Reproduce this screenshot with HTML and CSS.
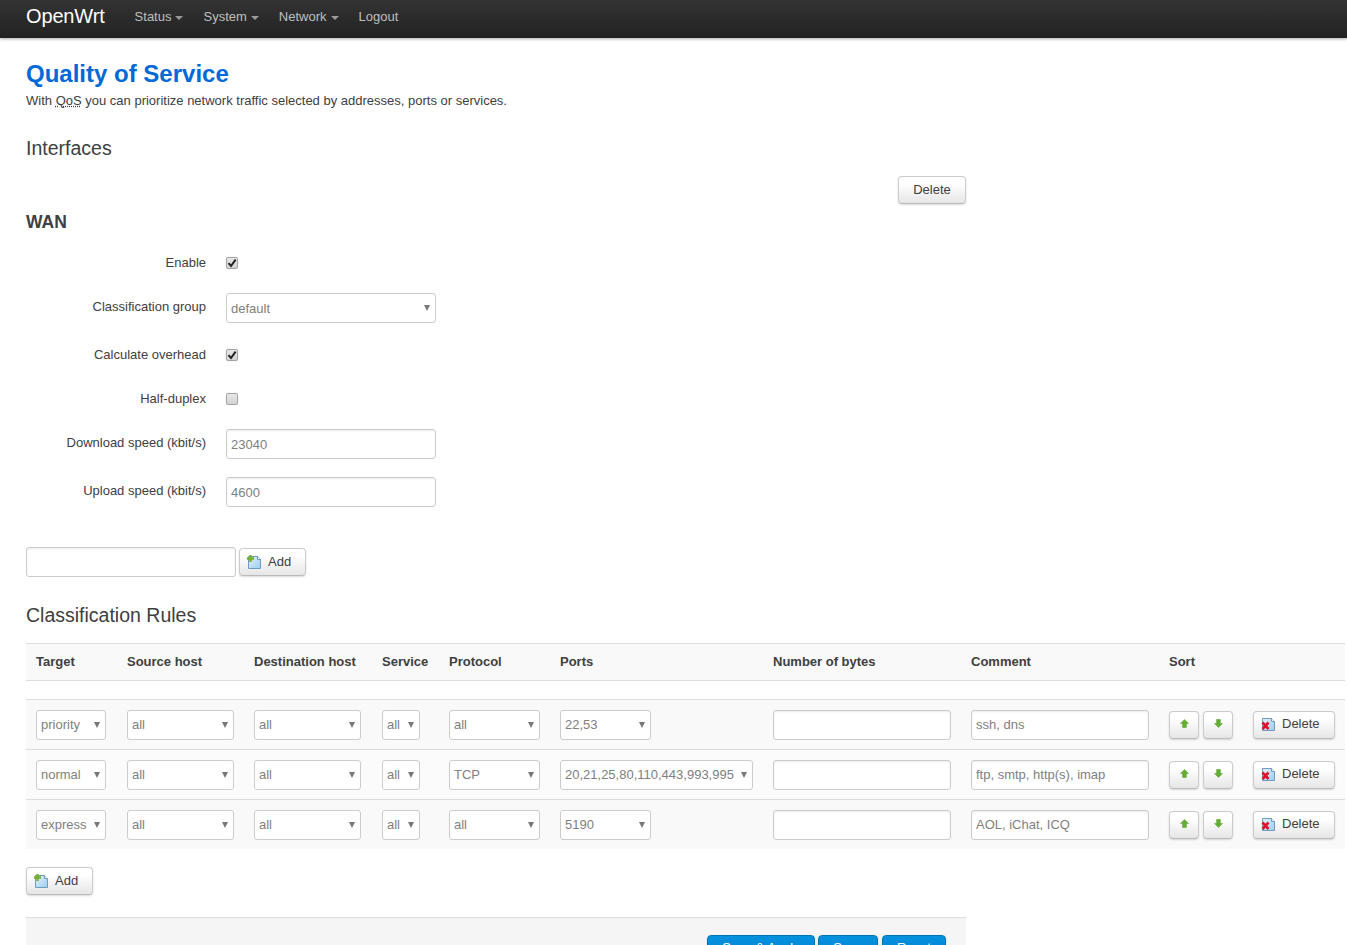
FILE: index.html
```html
<!DOCTYPE html>
<html lang="en">
<head>
<meta charset="utf-8">
<title>Quality of Service - OpenWrt</title>
<link rel="stylesheet" href="styles.css">
</head>
<body>
<svg class="defs" width="0" height="0" aria-hidden="true">
  <defs>
    <linearGradient id="docfill" x1="0" y1="0" x2="1" y2="1">
      <stop offset="0" stop-color="#e4f2fc"/>
      <stop offset="1" stop-color="#9ccdf0"/>
    </linearGradient>
    <symbol id="i-add" viewBox="0 0 15 15">
      <path d="M1.5 1.5h9l3 3v9h-12z" fill="url(#docfill)" stroke="#6f9cbd"/>
      <path d="M10.5 1.5v3h3" fill="#fff" stroke="#6f9cbd"/>
      <path d="M3.5 0v7M0 3.5h7" stroke="#74b02c" stroke-width="2.4"/>
    </symbol>
    <symbol id="i-del" viewBox="0 0 15 15">
      <path d="M1.5 1.5h9l3 3v9h-12z" fill="url(#docfill)" stroke="#6f9cbd"/>
      <path d="M10.5 1.5v3h3" fill="#fff" stroke="#6f9cbd"/>
      <path d="M1.5 5.5l6 6.5M7.5 5.5l-6 6.5" stroke="#e0122a" stroke-width="2.6"/>
    </symbol>
    <symbol id="i-up" viewBox="0 0 9 9">
      <path d="M4.5.5L8.5 4.5H6.4V8.5H2.6V4.5H.5z" fill="#66ad35" stroke="#559a28" stroke-width=".5"/>
    </symbol>
    <symbol id="i-down" viewBox="0 0 9 9">
      <path d="M4.5 8.5L8.5 4.5H6.4V.5H2.6V4.5H.5z" fill="#66ad35" stroke="#559a28" stroke-width=".5"/>
    </symbol>
    <symbol id="i-check" viewBox="0 0 10 10">
      <path d="M1.5 5.2L4 8 8.6 1.6" fill="none" stroke="#222" stroke-width="2"/>
    </symbol>
  </defs>
</svg>

<header class="navbar">
  <a class="brand" href="#">OpenWrt</a>
  <nav class="menu">
    <a class="menu-item" href="#">Status<span class="caret"></span></a>
    <a class="menu-item" href="#">System<span class="caret"></span></a>
    <a class="menu-item" href="#">Network<span class="caret"></span></a>
    <a class="menu-item" href="#">Logout</a>
  </nav>
</header>

<main class="main">
  <h2 class="page-title">Quality of Service</h2>
  <p class="page-desc">With <abbr title="Quality of Service">QoS</abbr> you can prioritize network traffic selected by addresses, ports or services.</p>

  <h3 class="section-title first">Interfaces</h3>
  <div class="section-actions"><button class="btn btn-plain" type="button">Delete</button></div>
  <h4 class="sub-title">WAN</h4>

  <form class="form">
    <div class="form-row check-row">
      <span class="form-label">Enable</span>
      <span class="check"><svg class="check-mark"><use href="#i-check"/></svg></span>
    </div>
    <div class="form-row">
      <span class="form-label">Classification group</span>
      <span class="sel w-field"><select><option>default</option></select></span>
    </div>
    <div class="form-row check-row">
      <span class="form-label">Calculate overhead</span>
      <span class="check"><svg class="check-mark"><use href="#i-check"/></svg></span>
    </div>
    <div class="form-row check-row">
      <span class="form-label">Half-duplex</span>
      <span class="check"></span>
    </div>
    <div class="form-row">
      <span class="form-label">Download speed (kbit/s)</span>
      <input class="text w-field" type="text" value="23040">
    </div>
    <div class="form-row">
      <span class="form-label">Upload speed (kbit/s)</span>
      <input class="text w-field" type="text" value="4600">
    </div>
  </form>

  <div class="add-row">
    <input class="text w-field" type="text">
    <button class="btn btn-icon" type="button"><svg class="icon"><use href="#i-add"/></svg>Add</button>
  </div>

  <h3 class="section-title rules">Classification Rules</h3>

  <table class="rules-table">
    <colgroup>
      <col class="c-target"><col class="c-src"><col class="c-dst"><col class="c-svc"><col class="c-proto"><col class="c-ports"><col class="c-bytes"><col class="c-comment"><col class="c-sort"><col class="c-del">
    </colgroup>
    <thead>
      <tr>
        <th>Target</th><th>Source host</th><th>Destination host</th><th>Service</th><th>Protocol</th><th>Ports</th><th>Number of bytes</th><th>Comment</th><th>Sort</th><th></th>
      </tr>
    </thead>
    <tbody>
      <tr class="spacer"><td colspan="10"></td></tr>
      <tr class="rule">
        <td><span class="sel w-target"><select><option>priority</option></select></span></td>
        <td><span class="sel w-host"><select><option>all</option></select></span></td>
        <td><span class="sel w-host"><select><option>all</option></select></span></td>
        <td><span class="sel w-svc"><select><option>all</option></select></span></td>
        <td><span class="sel w-proto"><select><option>all</option></select></span></td>
        <td><span class="sel w-proto"><select><option>22,53</option></select></span></td>
        <td><input class="text w-wide" type="text"></td>
        <td><input class="text w-wide" type="text" value="ssh, dns"></td>
        <td class="sort-cell"><button class="btn btn-sort" type="button"><svg class="arrow"><use href="#i-up"/></svg></button><button class="btn btn-sort" type="button"><svg class="arrow"><use href="#i-down"/></svg></button></td>
        <td><button class="btn btn-icon btn-del" type="button"><svg class="icon"><use href="#i-del"/></svg>Delete</button></td>
      </tr>
      <tr class="rule">
        <td><span class="sel w-target"><select><option>normal</option></select></span></td>
        <td><span class="sel w-host"><select><option>all</option></select></span></td>
        <td><span class="sel w-host"><select><option>all</option></select></span></td>
        <td><span class="sel w-svc"><select><option>all</option></select></span></td>
        <td><span class="sel w-proto"><select><option>TCP</option></select></span></td>
        <td><span class="sel w-ports-long"><select><option>20,21,25,80,110,443,993,995</option></select></span></td>
        <td><input class="text w-wide" type="text"></td>
        <td><input class="text w-wide" type="text" value="ftp, smtp, http(s), imap"></td>
        <td class="sort-cell"><button class="btn btn-sort" type="button"><svg class="arrow"><use href="#i-up"/></svg></button><button class="btn btn-sort" type="button"><svg class="arrow"><use href="#i-down"/></svg></button></td>
        <td><button class="btn btn-icon btn-del" type="button"><svg class="icon"><use href="#i-del"/></svg>Delete</button></td>
      </tr>
      <tr class="rule">
        <td><span class="sel w-target"><select><option>express</option></select></span></td>
        <td><span class="sel w-host"><select><option>all</option></select></span></td>
        <td><span class="sel w-host"><select><option>all</option></select></span></td>
        <td><span class="sel w-svc"><select><option>all</option></select></span></td>
        <td><span class="sel w-proto"><select><option>all</option></select></span></td>
        <td><span class="sel w-proto"><select><option>5190</option></select></span></td>
        <td><input class="text w-wide" type="text"></td>
        <td><input class="text w-wide" type="text" value="AOL, iChat, ICQ"></td>
        <td class="sort-cell"><button class="btn btn-sort" type="button"><svg class="arrow"><use href="#i-up"/></svg></button><button class="btn btn-sort" type="button"><svg class="arrow"><use href="#i-down"/></svg></button></td>
        <td><button class="btn btn-icon btn-del" type="button"><svg class="icon"><use href="#i-del"/></svg>Delete</button></td>
      </tr>
    </tbody>
  </table>

  <div class="table-add"><button class="btn btn-icon btn-add2" type="button"><svg class="icon"><use href="#i-add"/></svg>Add</button></div>

  <div class="form-actions">
    <button class="btn btn-primary b-apply" type="button">Save &amp; Apply</button>
    <button class="btn btn-primary b-save" type="button">Save</button>
    <button class="btn btn-primary b-reset" type="button">Reset</button>
  </div>
</main>
</body>
</html>
```

FILE: styles.css
```css
html, body {
  margin: 0;
  height: 945px;
  overflow: hidden;
  background: #fff;
}
body {
  font-family: "Liberation Sans", Arial, sans-serif;
  font-size: 13px;
  line-height: 20px;
  color: #404040;
}
.defs { position: absolute; }

.navbar {
  height: 38px;
  display: flex;
  align-items: center;
  padding-left: 26px;
  background: linear-gradient(#333, #222);
  box-shadow: 0 1px 3px rgba(0, 0, 0, .35);
}
.brand {
  color: #fff;
  font-size: 20px;
  text-decoration: none;
  margin-top: -6px;
  letter-spacing: -.15px;
}
.menu { display: flex; margin-left: 30px; }
.menu-item {
  color: #bfbfbf;
  font-size: 13px;
  text-decoration: none;
  margin-right: 20px;
  margin-top: -4px;
  display: flex;
  align-items: center;
}
.caret {
  width: 0;
  height: 0;
  margin-left: 4px;
  margin-top: 1px;
  border-left: 4px solid transparent;
  border-right: 4px solid transparent;
  border-top: 4px solid #999;
}

.main { width: 940px; padding-left: 26px; }

.page-title {
  margin: 21px 0 0;
  font-size: 24px;
  line-height: 30px;
  font-weight: 700;
  color: #0069d6;
}
.page-desc { margin: 2px 0 0; }
abbr { text-decoration: underline dotted; }

.section-title {
  margin: 0;
  font-size: 19.5px;
  line-height: 30px;
  font-weight: 400;
}
.section-title.first { margin-top: 22px; }
.section-title.rules { margin-top: 23px; }
.section-actions {
  margin-top: 13px;
  display: flex;
  justify-content: flex-end;
}
.sub-title {
  margin: 6px 0 0;
  font-size: 17.5px;
  line-height: 24px;
  font-weight: 700;
}

.form { margin-top: 15px; }
.form-row {
  display: flex;
  align-items: center;
  margin-bottom: 18px;
}
.check-row { height: 26px; }
.form-label {
  width: 180px;
  text-align: right;
  margin-right: 20px;
  padding-bottom: 2px;
}
.check-row .form-label { padding-bottom: 0; padding-top: 2px; }
.form-row:last-child { margin-bottom: 0; }

.check {
  width: 10px;
  height: 10px;
  margin-top: 2px;
  border: 1px solid #a5a5a5;
  border-radius: 2px;
  background: linear-gradient(#e8e8e8, #d2d2d2);
  box-shadow: 0 0 1px rgba(0, 0, 0, .25);
  display: flex;
  align-items: center;
  justify-content: center;
}
.check-mark { width: 10px; height: 10px; display: block; }

.text, .sel select {
  box-sizing: border-box;
  height: 30px;
  border: 1px solid #ccc;
  border-radius: 3px;
  background: #fff;
  font-family: inherit;
  font-size: 13px;
  color: #808080;
  padding: 0 4px;
  margin: 0;
  box-shadow: inset 0 1px 2px rgba(0, 0, 0, .08);
}
.sel {
  position: relative;
  display: inline-block;
  height: 30px;
  vertical-align: top;
}
.sel select {
  width: 100%;
  appearance: none;
  -webkit-appearance: none;
  box-shadow: none;
}
.sel::after {
  content: "";
  position: absolute;
  right: 6px;
  top: 12px;
  border-left: 3.5px solid transparent;
  border-right: 3.5px solid transparent;
  border-top: 6px solid #777;
  pointer-events: none;
}
.w-field { width: 210px; }
.w-target { width: 70px; }
.w-host { width: 107px; }
.w-svc { width: 38px; }
.w-proto { width: 91px; }
.w-ports-long { width: 193px; }
.w-wide { width: 178px; }

.btn {
  box-sizing: border-box;
  margin: 0;
  font-family: inherit;
  font-size: 13px;
  color: #404040;
  border: 1px solid #ccc;
  border-bottom-color: #bbb;
  border-radius: 4px;
  background: linear-gradient(#fff 25%, #e6e6e6);
  box-shadow: 0 1px 2px rgba(0, 0, 0, .15);
  padding: 0 0 2px;
}
.btn-plain { width: 68px; height: 28px; }
.btn-icon {
  display: inline-flex;
  align-items: center;
  gap: 6px;
  height: 28px;
  padding-left: 7px;
}
.icon { width: 15px; height: 15px; display: block; margin-top: 2px; }

.add-row {
  margin-top: 40px;
  display: flex;
  align-items: center;
  gap: 3px;
}
.add-row .btn-icon { width: 67px; }

.rules-table {
  margin-top: 13px;
  width: 1319px;
  table-layout: fixed;
  border-collapse: collapse;
  border-spacing: 0;
}
.c-target { width: 91px; }
.c-src { width: 127px; }
.c-dst { width: 128px; }
.c-svc { width: 67px; }
.c-proto { width: 111px; }
.c-ports { width: 213px; }
.c-bytes { width: 198px; }
.c-comment { width: 198px; }
.c-sort { width: 84px; }
.c-del { width: 102px; }

.rules-table th {
  height: 35px;
  padding: 0 0 1px 10px;
  text-align: left;
  font-weight: 700;
  background: #f9f9f9;
  border-top: 1px solid #ddd;
  border-bottom: 1px solid #ddd;
}
.spacer td { height: 18px; padding: 0; }
.rule td {
  height: 49px;
  padding: 0 0 0 10px;
  border-top: 1px solid #ddd;
  background: #f9f9f9;
  vertical-align: middle;
}
.rule:nth-child(odd) td { background: #fbfbfb; }
.rule td .text, .rule td .sel { display: block; }

.sort-cell { white-space: nowrap; }
.btn-sort {
  width: 30px;
  height: 28px;
  margin-right: 4px;
  display: inline-flex;
  align-items: center;
  justify-content: center;
  vertical-align: top;
}
.arrow { width: 9px; height: 9px; display: block; }
.btn-del { width: 82px; }

.table-add { margin-top: 18px; }
.btn-add2 { width: 67px; display: flex; }

.form-actions {
  margin-top: 22px;
  height: 60px;
  border-top: 1px solid #ddd;
  background: #f5f5f5;
  display: flex;
  padding-top: 17px;
  padding-left: 681px;
  gap: 3px;
}
.btn-primary {
  height: 30px;
  color: #fff;
  border: 1px solid #0077b3;
  background: linear-gradient(#0491de, #0a7fcd);
  text-align: center;
  padding-bottom: 6px;
}
.b-apply { width: 108px; }
.b-save { width: 60px; }
.b-reset { width: 64px; margin-left: 1px; }
```
